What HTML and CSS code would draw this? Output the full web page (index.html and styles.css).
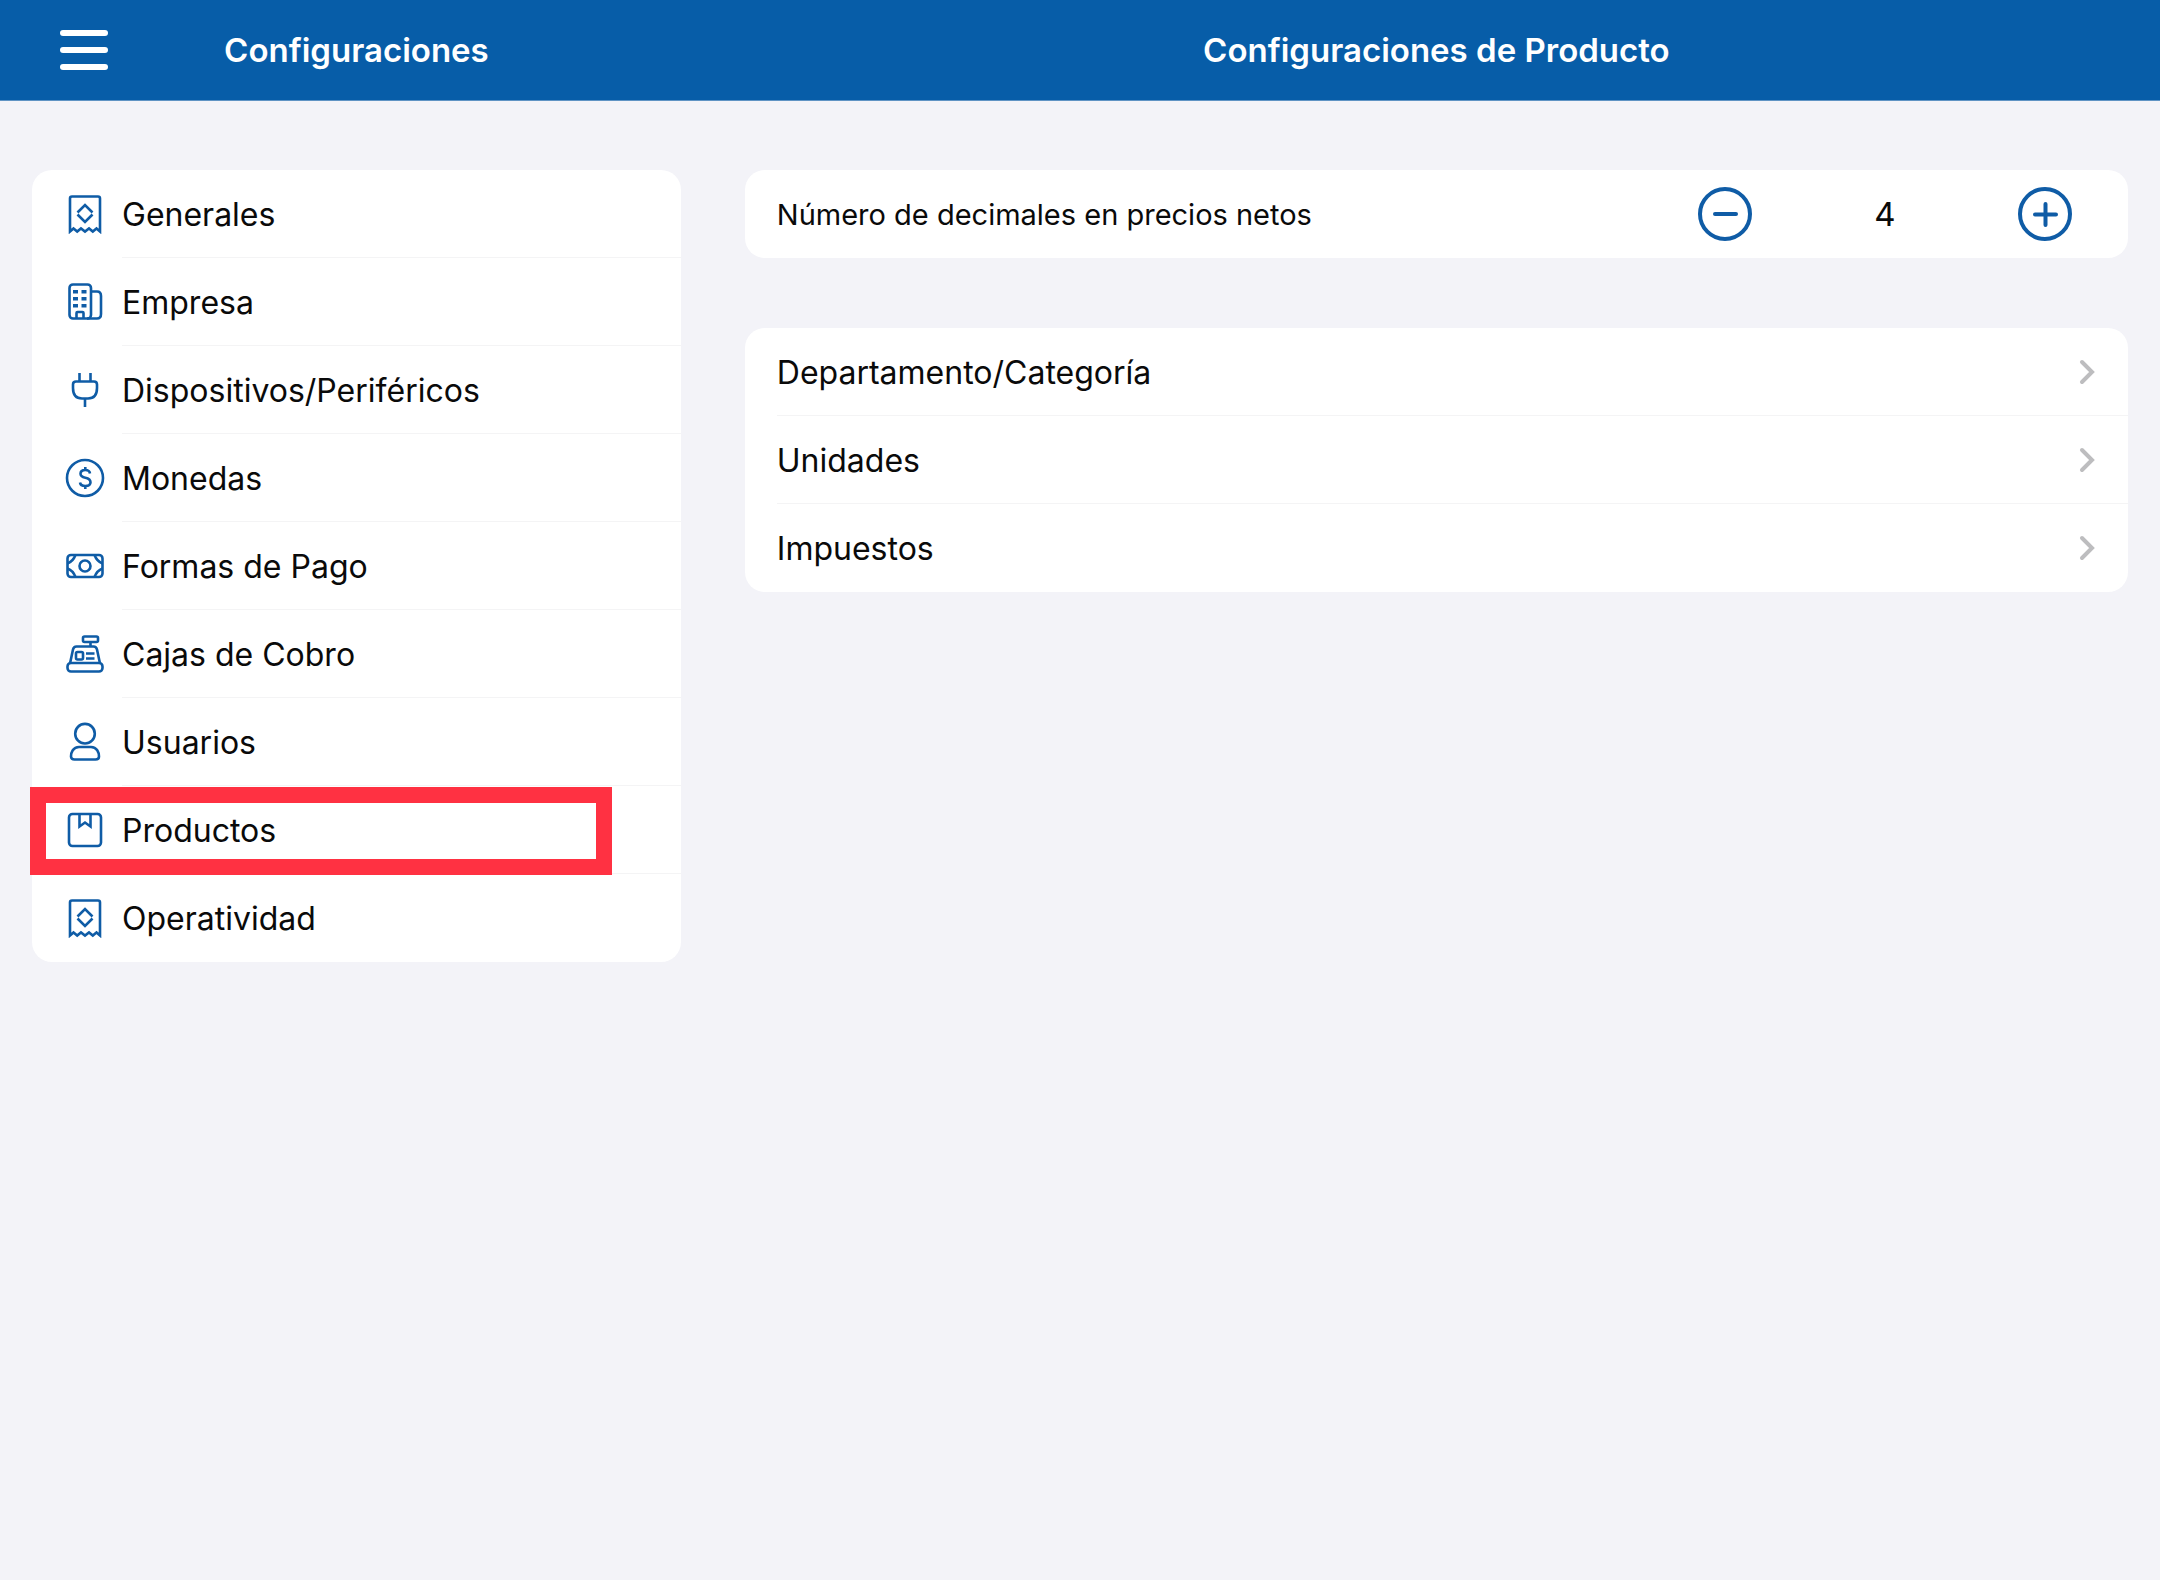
FILE: index.html
```html
<!DOCTYPE html>
<html lang="es">
<head>
<meta charset="utf-8">
<meta name="viewport" content="width=device-width, initial-scale=1">
<title>Configuraciones de Producto</title>
<link rel="stylesheet" href="styles.css">
</head>
<body>
<svg class="sprite" aria-hidden="true">
  <symbol id="receipt" viewBox="0 0 40 40">
    <path d="M5 37.500V4.500Q5 2.500 7 2.500H33Q35 2.500 35 4.500V37.500L31.500 34.500L27.800 37.500L24 34.500L20 37.500L16 34.500L12.200 37.500L8.500 34.500Z"/>
    <path d="M12.500 18.500L20 11L27.500 18.500M12.500 20.500L20 28L27.500 20.500"/>
  </symbol>
  <symbol id="building" viewBox="0 0 40 40">
    <rect x="4.500" y="2.500" width="21.500" height="34" rx="3.500"/>
    <path d="M26 9.500H32Q36 9.500 36 14V32Q36 36.500 32 36.500H22M11.500 36V31Q11.500 30 12.500 30H17.500Q18.500 30 18.500 31V36"/>
    <path class="solid" d="M8 8h5v3.500h-5zM16.500 8h5v3.500h-5zM8 15h5v3.500h-5zM16.500 15h5v3.500h-5zM8 22h5v3.500h-5zM16.500 22h5v3.500h-5z"/>
  </symbol>
  <symbol id="plug" viewBox="0 0 40 40">
    <path d="M11 11.500H29Q32 11.500 32 14.500V18Q32 28.500 23 28.500H17Q8 28.500 8 18V14.500Q8 11.500 11 11.500ZM14.500 11V3M25.500 11V3M20 29V37"/>
  </symbol>
  <symbol id="coin" viewBox="0 0 40 40">
    <circle cx="20" cy="20" r="18"/>
    <path d="M25 15.500Q24.500 12 20.300 12Q15.500 12 15.500 15.800Q15.500 18.800 20.300 19.700Q25.500 20.800 25.500 24.200Q25.500 28 20.300 28Q15.500 28 15 24.500M20.300 9V12M20.300 28V31"/>
  </symbol>
  <symbol id="banknote" viewBox="0 0 40 40">
    <rect x="2.500" y="9" width="35" height="22" rx="3.500"/>
    <circle cx="20" cy="20" r="5.500"/>
    <path d="M2.500 17.500Q8 15.500 10.500 9M2.500 22.500Q8 24.500 10.500 31M37.500 17.500Q32 15.500 29.500 9M37.500 22.500Q32 24.500 29.500 31"/>
  </symbol>
  <symbol id="register" viewBox="0 0 40 40">
    <rect x="18" y="2.500" width="15" height="5.500" rx="1.500"/>
    <rect x="2.500" y="29" width="35" height="8.500" rx="3.500"/>
    <path d="M25.500 8V12M5 29.500L8 15.500Q8.700 12.500 11.500 12.500H28.500Q31.300 12.500 32 15.500L35 29.500M21 19.500H29.500M21 24.500H29.500"/>
    <rect x="11" y="18" width="7" height="7.500" rx="1.500"/>
  </symbol>
  <symbol id="user" viewBox="0 0 40 40">
    <circle cx="20" cy="11.700" r="9.800"/>
    <path d="M14 25H26C32 25 34 30.500 34 34.500Q34 37.500 30.500 37.500H9.500Q6 37.500 6 34.500C6 30.500 8 25 14 25Z"/>
  </symbol>
  <symbol id="box" viewBox="0 0 40 40">
    <rect x="4" y="4" width="32" height="32" rx="3.500"/>
    <path d="M14.500 4V16.500L20 12.500L25.500 16.500V4"/>
  </symbol>
  <symbol id="chevron" viewBox="0 0 16 26">
    <path d="M3 3L13 13L3 23"/>
  </symbol>
</svg>

<header class="topbar">
  <div class="topbar-side">
    <button class="menu" type="button" aria-label="Menú"><span></span><span></span><span></span></button>
    <h1 class="title">Configuraciones</h1>
  </div>
  <h2 class="title">Configuraciones de Producto</h2>
</header>

<div class="columns">
  <nav class="column" aria-label="Configuraciones">
    <ul class="card">
      <li><a class="row" href="#generales"><svg class="icon"><use href="#receipt"/></svg><span class="label">Generales</span></a></li>
      <li><a class="row" href="#empresa"><svg class="icon"><use href="#building"/></svg><span class="label">Empresa</span></a></li>
      <li><a class="row" href="#dispositivos"><svg class="icon"><use href="#plug"/></svg><span class="label">Dispositivos/Periféricos</span></a></li>
      <li><a class="row" href="#monedas"><svg class="icon"><use href="#coin"/></svg><span class="label">Monedas</span></a></li>
      <li><a class="row" href="#formas-de-pago"><svg class="icon"><use href="#banknote"/></svg><span class="label">Formas de Pago</span></a></li>
      <li><a class="row" href="#cajas"><svg class="icon"><use href="#register"/></svg><span class="label">Cajas de Cobro</span></a></li>
      <li><a class="row" href="#usuarios"><svg class="icon"><use href="#user"/></svg><span class="label">Usuarios</span></a></li>
      <li><a class="row marked" href="#productos" aria-current="page"><svg class="icon"><use href="#box"/></svg><span class="label">Productos</span></a></li>
      <li><a class="row" href="#operatividad"><svg class="icon"><use href="#receipt"/></svg><span class="label">Operatividad</span></a></li>
    </ul>
  </nav>

  <main class="column">
    <section class="card setting">
      <span class="setting-name" id="decimales">Número de decimales en precios netos</span>
      <div class="stepper" role="group" aria-labelledby="decimales">
        <button class="step" type="button" aria-label="Menos"><svg viewBox="0 0 54 54"><circle cx="27" cy="27" r="25"/><path d="M17 27H38"/></svg></button>
        <output class="value">4</output>
        <button class="step" type="button" aria-label="Más"><svg viewBox="0 0 54 54"><circle cx="27" cy="27" r="25"/><path d="M17 27.500H38M27.500 17V38"/></svg></button>
      </div>
    </section>
    <ul class="card">
      <li><a class="row detail" href="#departamento"><span class="label">Departamento/Categoría<svg class="chevron"><use href="#chevron"/></svg></span></a></li>
      <li><a class="row detail" href="#unidades"><span class="label">Unidades<svg class="chevron"><use href="#chevron"/></svg></span></a></li>
      <li><a class="row detail" href="#impuestos"><span class="label">Impuestos<svg class="chevron"><use href="#chevron"/></svg></span></a></li>
    </ul>
  </main>
</div>
</body>
</html>
```

FILE: styles.css
```css
:root {
  --blue: #075da8;
  --icon: #0f5ca6;
  --page: #f3f3f8;
  --line: #f4f4f5;
  --mark: #ff3142;
}

* {
  box-sizing: border-box;
}

body {
  margin: 0;
  background: var(--page);
  color: #0a0a0a;
  font-family: Inter, "Liberation Sans", sans-serif;
  font-size: 32px;
}

.sprite {
  display: none;
}

svg {
  fill: none;
  stroke: var(--icon);
  stroke-width: 2.6;
}

.solid {
  fill: var(--icon);
  stroke: none;
}

.topbar,
.columns {
  display: grid;
  grid-template-columns: 33fr 67fr;
}

.topbar {
  height: 101px;
  align-items: center;
  background: var(--blue);
  border-bottom: 1px solid #5f93c4;
  color: #fff;
}

.topbar-side {
  display: grid;
  grid-template-columns: 108px 1fr 108px;
  align-items: center;
}

.title {
  margin: 0;
  font-size: 33px;
  font-weight: 600;
  line-height: 40px;
  text-align: center;
}

.menu {
  display: flex;
  flex-direction: column;
  gap: 11px;
  width: 48px;
  margin: 0 0 0 60px;
  padding: 0;
  border: 0;
  background: none;
}

.menu span {
  width: 100%;
  height: 6px;
  border-radius: 3px;
  background: #fff;
}

.column {
  display: flex;
  flex-direction: column;
  gap: 70px;
  padding: 69px 32px;
}

.card {
  margin: 0;
  padding: 0;
  border-radius: 20px;
  background: #fff;
  list-style: none;
}

.row {
  position: relative;
  display: flex;
  align-items: center;
  gap: 17px;
  padding-left: 33px;
  color: inherit;
  text-decoration: none;
}

.detail {
  padding-left: 32px;
}

.icon {
  flex: none;
  width: 40px;
  height: 40px;
}

.label {
  display: flex;
  flex: 1;
  align-items: center;
  justify-content: space-between;
  height: 88px;
  padding: 1px 33px 0 0;
  border-bottom: 1px solid var(--line);
}

li:last-child .label {
  border-bottom-color: transparent;
}

.marked::after {
  content: "";
  position: absolute;
  inset: 1px 69px -1px -2px;
  border: 16px solid var(--mark);
}

.chevron {
  width: 16px;
  height: 26px;
  stroke: #bdbdbf;
  stroke-width: 4;
  stroke-linecap: round;
}

.setting {
  display: flex;
  align-items: center;
  justify-content: space-between;
  height: 88px;
  padding: 0 56px 0 32px;
}

.setting-name {
  font-size: 29px;
}

.stepper {
  display: flex;
  align-items: center;
  justify-content: space-between;
  width: 374px;
}

.value {
  font-size: 33px;
}

.step {
  width: 54px;
  height: 54px;
  padding: 0;
  border: 0;
  background: none;
}

.step svg {
  display: block;
  stroke-width: 4;
  stroke-linecap: round;
}
```
